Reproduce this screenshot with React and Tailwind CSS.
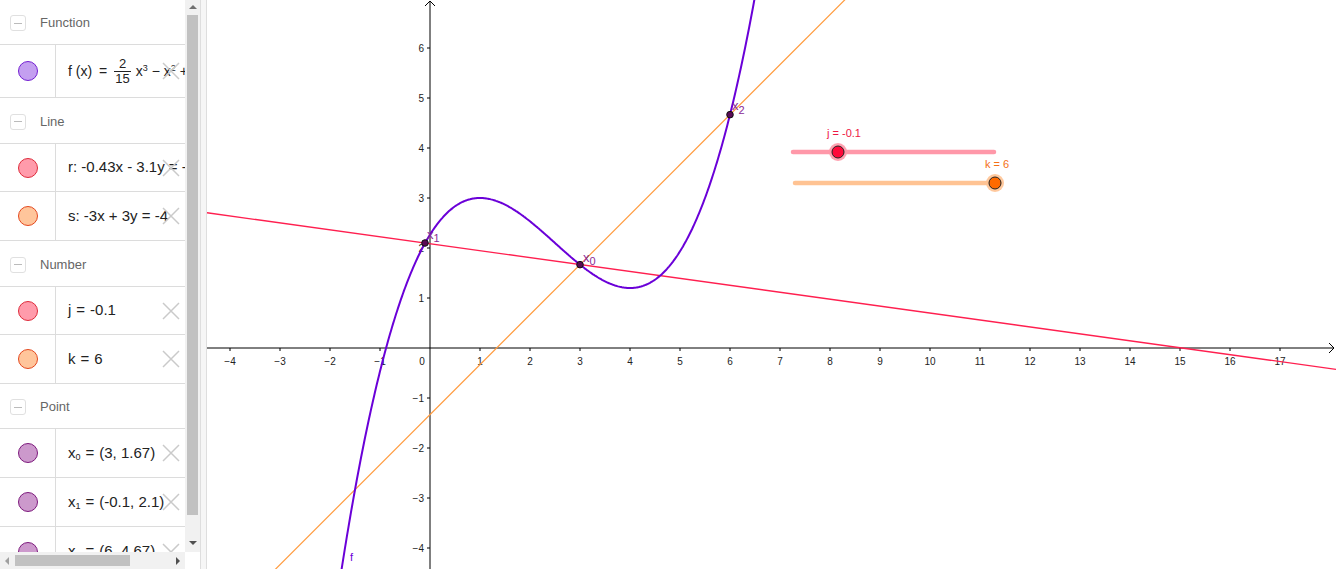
import React from "react";

const OX = 430;
const OY = 348;
const U = 50;
const px = (x) => OX + x * U;
const py = (y) => OY - y * U;

const f = (x) => (2 / 15) * x ** 3 - x ** 2 + 1.6 * x + 34 / 15;
const fPath = (() => {
  let d = "";
  for (let x = -1.8; x <= 6.6; x += 0.02) {
    d += (d ? "L" : "M") + px(x).toFixed(1) + " " + py(f(x)).toFixed(1);
  }
  return d;
})();
const r = (x) => (6.467 - 0.43 * x) / 3.1;
const s = (x) => x - 4 / 3;

const FONT = { fontFamily: '"Liberation Sans", Arial, sans-serif' };

function Circle({ fill, stroke }) {
  return (
    <div className="flex w-[56px] shrink-0 items-center justify-center self-stretch border-r border-[#dcdcdc]">
      <div className="h-[20px] w-[20px] rounded-full border" style={{ background: fill, borderColor: stroke }} />
    </div>
  );
}

function Del() {
  return (
    <svg className="absolute right-[5px] top-1/2 -translate-y-1/2" width="18" height="18" viewBox="0 0 18 18">
      <path d="M1 1L17 17M17 1L1 17" stroke="#cacaca" strokeWidth="1.5" />
    </svg>
  );
}

function Header({ label, h }) {
  return (
    <div className="flex shrink-0 items-center border-b border-[#dcdcdc] pt-[2px]" style={{ height: h }}>
      <div className="ml-[10px] flex h-[16px] w-[16px] items-center justify-center rounded-[3px] border border-[#e0e0e0]">
        <div className="h-px w-[8px] bg-[#bbbbbb]" />
      </div>
      <span className="ml-[14px] text-[13px] text-[#666]">{label}</span>
    </div>
  );
}

function Item({ h, fill, stroke, children, last }) {
  return (
    <div className={"relative flex shrink-0 items-center " + (last ? "" : "border-b border-[#dcdcdc]")} style={{ height: h }}>
      <Circle fill={fill} stroke={stroke} />
      <div className="ml-[12px] whitespace-nowrap text-[15px] text-[#222]">{children}</div>
      <Del />
    </div>
  );
}

const sub = (t) => <sub className="relative top-[2px] text-[9px]">{t}</sub>;
const Eq = () => <span className="mx-[5px]">=</span>;

function Algebra() {
  const red = ["#ff9bab", "#de2b3b"];
  const org = ["#ffc59b", "#e4481e"];
  const pt = ["#cc99cc", "#7d1a7d"];
  return (
    <div className="flex w-[200px] shrink-0 flex-col bg-white">
      <div className="flex h-[552px]">
        <div className="flex w-[185px] flex-col overflow-hidden">
          <Header label="Function" h={45} />
          <Item h={53} fill="#c49ff0" stroke="#7420d2">
            <span className="inline-flex items-center text-[14px]">
              f (x) <span className="mx-[7px]">=</span>
              <span className="inline-flex flex-col items-center text-[13px] leading-[14px]">
                <span>2</span>
                <span className="border-t border-[#222] px-px">15</span>
              </span>
              <span className="ml-[5px]">x<sup className="text-[9px]">3</sup> − x<sup className="text-[9px]">2</sup> + 1.6x</span>
            </span>
          </Item>
          <Header label="Line" h={46} />
          <Item h={48} fill={red[0]} stroke={red[1]}>r: -0.43x - 3.1y = -6.47</Item>
          <Item h={49} fill={org[0]} stroke={org[1]}>s: -3x + 3y = -4</Item>
          <Header label="Number" h={46} />
          <Item h={48} fill={red[0]} stroke={red[1]}>j<Eq />-0.1</Item>
          <Item h={49} fill={org[0]} stroke={org[1]}>k<Eq />6</Item>
          <Header label="Point" h={45} />
          <Item h={49} fill={pt[0]} stroke={pt[1]}>x{sub("0")}<Eq />(3, 1.67)</Item>
          <Item h={49} fill={pt[0]} stroke={pt[1]}>x{sub("1")}<Eq />(-0.1, 2.1)</Item>
          <Item h={49} fill={pt[0]} stroke={pt[1]} last>x{sub("2")}<Eq />(6, 4.67)</Item>
        </div>
        <div className="flex w-[15px] flex-col items-center bg-[#f1f1f1]">
          <div className="mt-[5px] h-0 w-0 border-x-[4px] border-b-[4px] border-x-transparent border-b-[#707070]" />
          <div className="mt-[6px] h-[500px] w-[11px] bg-[#c1c1c1]" />
          <div className="mt-[26px] h-0 w-0 border-x-[4px] border-t-[4px] border-x-transparent border-t-[#505050]" />
        </div>
      </div>
      <div className="flex h-[17px]">
        <div className="flex w-[185px] items-center bg-[#f1f1f1]">
          <div className="ml-[5px] h-0 w-0 border-y-[4px] border-r-[4px] border-y-transparent border-r-[#a0a0a0]" />
          <div className="ml-[6px] h-[11px] w-[115px] bg-[#c1c1c1]" />
          <div className="ml-[46px] h-0 w-0 border-y-[4px] border-l-[4px] border-y-transparent border-l-[#505050]" />
        </div>
        <div className="w-[15px] bg-white" />
      </div>
    </div>
  );
}

function Graph() {
  const xs = [];
  for (let i = -4; i <= 17; i++) xs.push(i);
  const ys = [-4, -3, -2, -1, 1, 2, 3, 4, 5, 6];
  const lab = (n) => (n < 0 ? "−" + Math.abs(n) : String(n));
  const purple = "#8a2a96";
  return (
    <div className="flex-1 bg-white">
      <svg width="1129" height="569" viewBox="207 0 1129 569" style={FONT}>
        <line x1="207" y1={OY} x2="1334" y2={OY} stroke="#000" strokeWidth="1" />
        <line x1={OX} y1="1" x2={OX} y2="569" stroke="#000" strokeWidth="1" />
        <path d={`M1329 ${OY - 5}L1334 ${OY}L1329 ${OY + 5}`} fill="none" stroke="#000" />
        <path d={`M${OX - 5} 6L${OX} 1L${OX + 5} 6`} fill="none" stroke="#000" />
        {xs.map((i) =>
          i === 0 ? null : (
            <g key={"x" + i}>
              <line x1={px(i)} y1={OY} x2={px(i)} y2={OY + 3} stroke="#000" />
              <text x={px(i)} y={OY + 17} fontSize="10" textAnchor="middle" fill="#222">{lab(i)}</text>
            </g>
          )
        )}
        <text x={OX - 8} y={OY + 17} fontSize="10" textAnchor="middle" fill="#222">0</text>
        {ys.map((i) => (
          <g key={"y" + i}>
            <line x1={OX - 3} y1={py(i)} x2={OX} y2={py(i)} stroke="#000" />
            <text x={OX - 6} y={py(i) + 3.5} fontSize="10" textAnchor="end" fill="#222">{lab(i)}</text>
          </g>
        ))}
        <line x1="207" y1={py(r(-4.46))} x2="1336" y2={py(r(18.12))} stroke="#ff1f4f" strokeWidth="1.3" />
        <line x1={px(-3.3)} y1={py(s(-3.3))} x2={px(8.5)} y2={py(s(8.5))} stroke="#ff9a3c" strokeWidth="1.2" />
        <path d={fPath} fill="none" stroke="#6a00d8" strokeWidth="2" />
        {[[3, 1.667], [-0.1, 2.1], [6, 4.667]].map(([a, b], k) => (
          <circle key={k} cx={px(a)} cy={py(b)} r="3.3" fill="#5a0a55" stroke="#111" strokeWidth="1" />
        ))}
        <text x="583" y="262" fontSize="13" fill={purple}>x<tspan fontSize="11" dy="3">0</tspan></text>
        <text x="427" y="239" fontSize="13" fill={purple}>x<tspan fontSize="11" dy="3">1</tspan></text>
        <text x="732" y="110" fontSize="13" fill={purple}>x<tspan fontSize="11" dy="4">2</tspan></text>
        <text x="350" y="561" fontSize="11" fill="#6a00d8">f</text>
        <line x1="793" y1="152" x2="994" y2="152" stroke="#ff98a9" strokeWidth="4.5" strokeLinecap="round" />
        <circle cx="838" cy="152" r="9" fill="#ff98a9" opacity="0.9" />
        <circle cx="838" cy="152" r="6" fill="#ff0a3a" stroke="#222" strokeWidth="1" />
        <text x="827" y="137" fontSize="11" fill="#ee1744">j = -0.1</text>
        <line x1="795" y1="183" x2="994" y2="183" stroke="#ffc393" strokeWidth="4.5" strokeLinecap="round" />
        <circle cx="995" cy="183" r="9" fill="#ffc393" opacity="0.9" />
        <circle cx="995" cy="183" r="6" fill="#ff6a00" stroke="#222" strokeWidth="1" />
        <text x="985" y="168" fontSize="11" fill="#f47016">k = 6</text>
      </svg>
    </div>
  );
}

export default function App() {
  return (
    <div className="flex h-[569px] w-[1336px] overflow-hidden bg-white" style={FONT}>
      <Algebra />
      <div className="w-[7px] shrink-0 border-x border-[#dedede] bg-[#f6f6f6]" />
      <Graph />
    </div>
  );
}
